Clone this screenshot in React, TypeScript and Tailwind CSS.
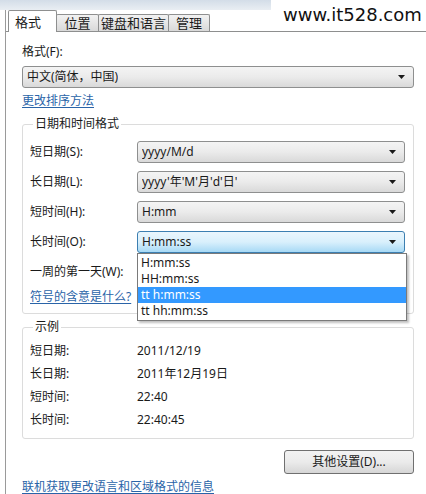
import { ReactNode } from 'react'

const font = { fontFamily: '"Noto Sans", "Noto Sans CJK SC", sans-serif' }

function Arrow() {
  return (
    <svg width="7" height="4" viewBox="0 0 7 4" className="shrink-0">
      <path d="M0 0h7L3.5 4z" fill="#1a1a1a" />
    </svg>
  )
}

function Select({ value, focused, className }: { value: string; focused?: boolean; className?: string }) {
  return (
    <div
      className={
        'h-[22px] flex items-center justify-between pl-[4px] pr-[8px] rounded-[3px] border text-[12px] ' +
        (focused
          ? 'border-[#3c7fb1] bg-gradient-to-b from-[#eaf6fd] via-[#d9f0fc] to-[#a7d9f5]'
          : 'border-[#8e8f8f] bg-gradient-to-b from-[#f4f4f4] via-[#ebebeb] to-[#d9d9d9]') +
        ' ' +
        (className ?? '')
      }
    >
      <span className="truncate">{value}</span>
      <Arrow />
    </div>
  )
}

function Row({ label, children }: { label: string; children: ReactNode }) {
  return (
    <div className="flex items-center h-[22px]">
      <span className="w-[107px] shrink-0 text-[12px]">{label}</span>
      <div className="flex-1 relative">{children}</div>
    </div>
  )
}

function Tab({ label, active, w }: { label: string; active?: boolean; w: string }) {
  if (active) {
    return (
      <div className={'relative z-10 h-[22px] -mb-px bg-white border border-b-0 border-[#8e8f8f] rounded-t-[2px] pl-[6px] pt-[2px] text-[13px] ' + w}>
        {label}
      </div>
    )
  }
  return (
    <div className={'h-[17px] -ml-px border border-b-0 border-[#8e8f8f] rounded-t-[2px] bg-gradient-to-b from-[#f2f2f2] to-[#d9d9d9] text-center leading-[16px] text-[13px] ' + w}>
      {label}
    </div>
  )
}

const Link = ({ children, className }: { children: ReactNode; className?: string }) => (
  <div className={'text-[12px] leading-[16px] ' + (className ?? '')}>
    <span className="text-[#2a64a8] underline underline-offset-2">{children}</span>
  </div>
)

export default function App() {
  const samples = [
    ['短日期:', '2011/12/19'],
    ['长日期:', '2011年12月19日'],
    ['短时间:', '22:40'],
    ['长时间:', '22:40:45'],
  ]
  const options = ['H:mm:ss', 'HH:mm:ss', 'tt h:mm:ss', 'tt hh:mm:ss']

  return (
    <div className="w-[426px] h-[494px] bg-white relative overflow-hidden text-[#1a1a1a]" style={font}>
      {/* window frame strip */}
      <div className="h-[10px] bg-gradient-to-b from-[#d3dde8] to-[#e9eef3]" />
      <div className="absolute top-0 right-0 w-[155px] h-[30px] bg-white pl-[12px] pt-[3px] text-[18px] leading-[24px] text-[#111]" style={{ fontFamily: '"DejaVu Sans", sans-serif' }}>
        www.it528.com
      </div>

      <div className="ml-[5px] border-l border-[#9a9a9a] h-[484px]">
        <div className="flex items-end h-[21px] pl-[2px]">
          <Tab label="格式" active w="w-[49px]" />
          <Tab label="位置" w="w-[43px]" />
          <Tab label="键盘和语言" w="w-[71px]" />
          <Tab label="管理" w="w-[42px]" />
        </div>

        <div className="border-t border-[#8e8f8f] pl-[16px] pr-[12px] pt-[12px]">
          <div className="text-[12px] leading-[16px]">格式(F):</div>
          <Select value="中文(简体，中国)" className="mt-[6px]" />
          <Link className="mt-[5px]">更改排序方法</Link>

          <fieldset className="mt-[7px] border border-[#dcdcdc] rounded-[3px] pl-[7px] pr-[8px] pt-[9px] pb-[8px]">
            <legend className="ml-[3px] px-[2px] text-[12px] leading-[16px]">日期和时间格式</legend>
            <div className="flex flex-col gap-[8px]">
              <Row label="短日期(S):">
                <Select value="yyyy/M/d" />
              </Row>
              <Row label="长日期(L):">
                <Select value="yyyy'年'M'月'd'日'" />
              </Row>
              <Row label="短时间(H):">
                <Select value="H:mm" />
              </Row>
              <Row label="长时间(O):">
                <Select value="H:mm:ss" focused />
                <div className="absolute z-20 top-[22px] left-0 w-[270px] bg-white border border-[#7a7a7a] shadow-[2px_2px_2px_rgba(0,0,0,0.25)] py-px text-[12px]">
                  {options.map((o) => (
                    <div
                      key={o}
                      className={'h-[16px] leading-[16px] pl-[3px] ' + (o === 'tt h:mm:ss' ? 'bg-[#3399ff] text-white' : '')}
                    >
                      {o}
                    </div>
                  ))}
                </div>
              </Row>
              <Row label="一周的第一天(W):">
                <Select value="" />
              </Row>
            </div>
            <Link className="mt-[6px]">符号的含意是什么?</Link>
          </fieldset>

          <fieldset className="mt-[5px] border border-[#dcdcdc] rounded-[3px] pl-[7px] pt-[4px] pb-[7px]">
            <legend className="ml-[3px] px-[2px] text-[12px] leading-[16px]">示例</legend>
            {samples.map(([k, v]) => (
              <div key={k} className="flex items-center h-[23px] text-[12px]">
                <span className="w-[107px] shrink-0">{k}</span>
                <span>{v}</span>
              </div>
            ))}
          </fieldset>

          <div className="flex justify-end mt-[11px]">
            <button className="w-[130px] h-[24px] rounded-[3px] border border-[#707070] bg-gradient-to-b from-[#f2f2f2] via-[#ebebeb] to-[#d6d6d6] text-[12px]">
              其他设置(D)...
            </button>
          </div>

          <Link className="mt-[5px]">联机获取更改语言和区域格式的信息</Link>
        </div>
      </div>
    </div>
  )
}
